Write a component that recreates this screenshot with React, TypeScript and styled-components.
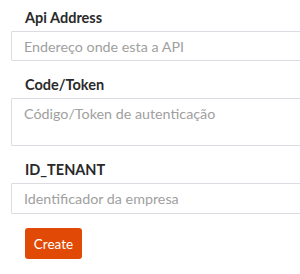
import React from 'react'
import styled, {createGlobalStyle} from 'styled-components'

const Global = createGlobalStyle`
  body {
    margin: 0;
    background: #fff;
    font-family: Lato, "Open Sans", Arial, sans-serif;
  }
`

const Form = styled.form`
  display: flex;
  flex-direction: column;
  padding: 8px 0 0 11px;
`

const Field = styled.div`
  display: flex;
  flex-direction: column;
  margin-bottom: 14px;
`

const Label = styled.label`
  display: block;
  height: 20px;
  line-height: 20px;
  margin: 0 0 3px 14px;
  font-size: 14.5px;
  font-weight: 700;
  color: #2a2a2a;
`

const inputBase = `
  box-sizing: border-box;
  width: 300px;
  border: 1px solid #dcdce2;
  border-radius: 1px;
  padding: 0 12px;
  font-family: Lato, "Open Sans", Arial, sans-serif;
  font-size: 14.3px;
  color: #333;
  outline: none;
  background: #fff;
  &::placeholder {
    color: #a0a0a0;
  }
`

const Input = styled.input<{$h: number}>`
  ${inputBase}
  height: ${p => p.$h}px;
`

const TextArea = styled.textarea`
  ${inputBase}
  height: 48px;
  padding-top: 6px;
  resize: none;
  display: block;
`

const Button = styled.button`
  align-self: flex-start;
  margin-left: 14px;
  width: 57px;
  height: 31px;
  border: none;
  border-radius: 3px;
  background: #e04a06;
  color: #fff;
  font-family: Lato, "Open Sans", Arial, sans-serif;
  font-size: 13.5px;
  cursor: pointer;
`

export default function App() {
  return (
    <>
      <Global />
      <Form onSubmit={e => e.preventDefault()}>
        <Field>
          <Label>Api Address</Label>
          <Input $h={30} placeholder="Endereço onde esta a API" />
        </Field>
        <Field>
          <Label>Code/Token</Label>
          <TextArea placeholder="Código/Token de autenticação" />
        </Field>
        <Field>
          <Label>ID_TENANT</Label>
          <Input $h={31} placeholder="Identificador da empresa" />
        </Field>
        <Button type="submit">Create</Button>
      </Form>
    </>
  )
}
